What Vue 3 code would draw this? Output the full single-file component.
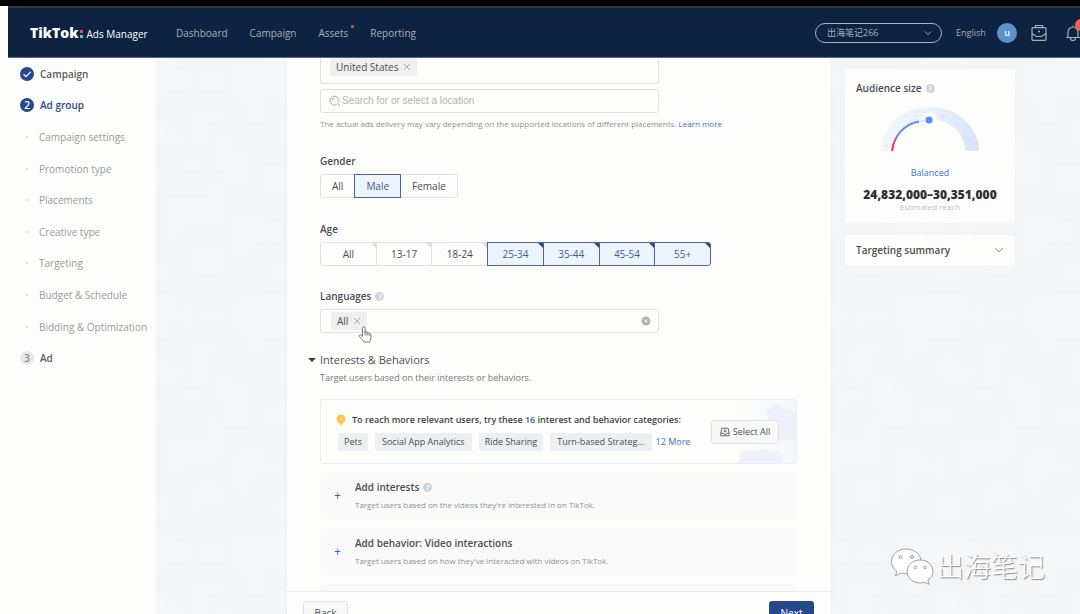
<script setup>
import { ref } from 'vue'

const nav = [
  { label: 'Dashboard' },
  { label: 'Campaign' },
  { label: 'Assets', dot: true },
  { label: 'Reporting' },
]
const steps = ['Campaign settings', 'Promotion type', 'Placements', 'Creative type', 'Targeting', 'Budget & Schedule', 'Bidding & Optimization']
const genders = ['All', 'Male', 'Female']
const gender = ref('Male')
const ages = ['All', '13-17', '18-24', '25-34', '35-44', '45-54', '55+']
const selectedAges = ref(['25-34', '35-44', '45-54', '55+'])
const categories = ['Pets', 'Social App Analytics', 'Ride Sharing', 'Turn-based Strateg...']
const dots = [[6, 40], [10, 32], [17, 21], [25, 15], [35, 10], [62, 10], [75, 18], [83, 27], [88, 35], [44, 6], [70, 14], [92, 41]]

function toggleAge(a) {
  const i = selectedAges.value.indexOf(a)
  if (i >= 0) selectedAges.value.splice(i, 1)
  else selectedAges.value.push(a)
}
</script>

<template>
  <div class="page">
    <header class="topbar">
      <a class="brand" href="#"><b>TikTok</b><i class="colon"></i><span>Ads Manager</span></a>
      <nav>
        <a v-for="n in nav" :key="n.label" href="#">{{ n.label }}<i v-if="n.dot" class="reddot"></i></a>
      </nav>
      <div class="account">
        <select aria-label="Account"><option>出海笔记266</option></select>
        <svg viewBox="0 0 8 8"><path d="M1 2.5 4 5.5 7 2.5" /></svg>
      </div>
      <a class="lang" href="#">English</a>
      <button class="avatar">u</button>
      <button class="icon case" aria-label="Business center">
        <svg viewBox="0 0 18 18"><path d="M5.500 3.700V1.500h7v2.200M3 3.700h12a1 1 0 0 1 1 1v10.600a1 1 0 0 1-1 1H3a1 1 0 0 1-1-1V4.700a1 1 0 0 1 1-1zM2 9.500l4.500 3h5l4.500-3" /><circle cx="9" cy="7.500" r="1" class="fill" /></svg>
      </button>
      <button class="icon bell" aria-label="Notifications">
        <svg viewBox="0 0 18 18"><path d="M2 13.500h14M4 13.500V8a5 5 0 0 1 10 0v5.500M6.500 14a2.500 2.500 0 0 0 5 0M9 3V1.500" /></svg>
        <i class="badge"></i>
      </button>
    </header>

    <div class="workspace">
      <svg class="texture" aria-hidden="true">
        <defs>
          <pattern id="tiles" width="132" height="236" patternUnits="userSpaceOnUse">
            <path d="M0 0h40v12h18v20H36v12H0zM66 18h26v14H66zM104 6h28v58h-18V40h-10zM14 62h20v12h14v12H14zM58 54h30v10h-12v22H58zM0 108h28v22H0zM50 96h18v16H50zM82 82h20v12h16v38H92v-20H82zM34 140h42v-14h14v40H48v12H34zM4 164h14v20H4zM104 158h28v26h-14v14h-14zM62 190h26v26H62zM12 206h26v16H12z" />
          </pattern>
        </defs>
        <rect width="100%" height="100%" fill="url(#tiles)" />
      </svg>

      <aside class="steps">
        <ol>
          <li class="major"><i class="num done"><svg viewBox="0 0 14 14"><path d="M3.500 7.200 6 9.600 10.700 4.800" /></svg></i><a href="#">Campaign</a></li>
          <li class="major current"><i class="num">2</i><a href="#">Ad group</a></li>
          <li v-for="s in steps" :key="s" class="minor"><i class="pip"></i><a href="#">{{ s }}</a></li>
          <li class="major todo"><i class="num">3</i><a href="#">Ad</a></li>
        </ol>
      </aside>

      <main class="panel">
        <div class="content">
          <div class="locations">
            <span class="tag">United States <button aria-label="Remove United States"><svg viewBox="0 0 8 8"><path d="m1 1 6 6M7 1 1 7" /></svg></button></span>
          </div>
          <label class="field search">
            <svg viewBox="0 0 12 12"><path d="M7.600 9.700A4.500 4.500 0 1 1 9.600 7.600M3.300 5.500a2.300 2.300 0 0 1 2-2.200M8.300 8.300l2.700 2.700" /></svg>
            <input type="text" placeholder="Search for or select a location" aria-label="Location" />
          </label>
          <p class="hint">The actual ads delivery may vary depending on the supported locations of different placements. <a href="#">Learn more</a></p>

          <h3>Gender</h3>
          <div class="segments gender">
            <button v-for="g in genders" :key="g" :class="{ on: g === gender }" @click="gender = g">{{ g }}</button>
          </div>

          <h3>Age</h3>
          <div class="segments age">
            <button v-for="a in ages" :key="a" :class="{ on: selectedAges.includes(a) }" @click="toggleAge(a)">{{ a }}</button>
          </div>

          <h3>Languages <i class="help">?</i></h3>
          <div class="field languages">
            <span class="tag">All <button aria-label="Remove All"><svg viewBox="0 0 8 8"><path d="m1 1 6 6M7 1 1 7" /></svg></button></span>
            <svg class="cursor" viewBox="0 0 14 18" aria-hidden="true"><path d="M4.500 10.500V2.200a1.300 1.300 0 0 1 2.600 0V7l.2-1c1-.6 1.900 0 2 .8.900-.5 1.700 0 1.900.8 1-.3 1.700.3 1.700 1.200v3.400c0 1.600-1 2.500-1.300 3.800H5.800C5 14.200 3.300 12.600 1.500 10.300.8 9 2.400 8.300 3.200 9.200z" /><path d="M7.100 7v2.500M9.200 7v2.500M11.200 7.800v2" /></svg>
            <button class="clear" aria-label="Clear languages"><svg viewBox="0 0 10 10"><circle cx="5" cy="5" r="4.500" /><path d="m3.400 3.400 3.200 3.200M6.600 3.400 3.400 6.600" /></svg></button>
          </div>

          <h2><i class="caret"></i>Interests &amp; Behaviors</h2>
          <p class="desc">Target users based on their interests or behaviors.</p>

          <section class="suggest">
            <svg class="gears" viewBox="0 0 58 63" preserveAspectRatio="xMaxYMid slice" aria-hidden="true">
              <path d="M34 4h8l3 5 7-1 3 5h3v29l-5-3-8 3-4-5-8-1 1-8-6-5 3-7-3-6 6-3z" />
              <path d="M0 63l3-10 8-4 8 3 7-4 7 4 6-2 6 6-1 7z" />
            </svg>
            <div class="suggest-text">
              <p class="lead">
                <svg viewBox="0 0 10 12"><path d="M5 .5a4.500 4.500 0 0 1 2.300 8.300L5 11.500 2.700 8.800A4.500 4.500 0 0 1 5 .5z" fill="#fbc646" /><path d="M3.300 4.800q1.700 1.300 3.400 0" fill="none" stroke="#fff4d0" stroke-width=".9" /></svg>
                <span>To reach more relevant users, try these <em>16</em> interest and behavior categories:</span>
              </p>
              <div class="cats">
                <span v-for="c in categories" :key="c">{{ c }}</span>
                <a href="#">12 More</a>
              </div>
            </div>
            <button class="plain select-all">
              <svg viewBox="0 0 12 12"><path d="M2.200 1.500h7.600L11 7v3.500H1V7zM1 7.500h2.800q.5 1.500 2.200 1.500t2.200-1.500H11M6 3v3.500M4.300 4.800h3.400" /></svg>Select All
            </button>
          </section>

          <section class="add">
            <button aria-label="Add interests">+</button>
            <div><h4>Add interests <i class="help">?</i></h4><p>Target users based on the videos they're interested in on TikTok.</p></div>
          </section>
          <section class="add">
            <button aria-label="Add video interactions">+</button>
            <div><h4>Add behavior: Video interactions</h4><p>Target users based on how they've interacted with videos on TikTok.</p></div>
          </section>
          <section class="add"></section>
        </div>
        <footer>
          <button class="plain">Back</button>
          <button class="primary">Next</button>
        </footer>
      </main>

      <aside class="side">
        <section class="card audience">
          <h3>Audience size <i class="help">?</i></h3>
          <svg class="gauge" viewBox="0 0 98 46">
            <defs>
              <linearGradient id="band" x1="0" x2="1"><stop offset="0" stop-color="#f5f7fd" /><stop offset=".5" stop-color="#e9f0fc" /><stop offset="1" stop-color="#d6e4fb" /></linearGradient>
              <linearGradient id="arc" x1="0" y1="1" x2="1" y2="0"><stop offset=".1" stop-color="#ee2e62" /><stop offset=".42" stop-color="#5b8fee" /><stop offset="1" stop-color="#5b96f5" /></linearGradient>
            </defs>
            <path d="M0 45a49 44 0 0 1 98 0H84a35 32 0 0 0-70 0z" fill="url(#band)" />
            <circle v-for="d in dots" :key="d[0]" :cx="d[0]" :cy="d[1]" r=".5" fill="#aabbe0" />
            <circle cx="48" cy="14" r="8" fill="#fdfdfe" />
            <path d="M11 45C13 29 24 18 38 15.500" fill="none" stroke="url(#arc)" stroke-width="2" />
            <path d="M38 15.500 43 14.500" stroke="#cfe0fb" stroke-width="1.500" />
            <circle cx="48" cy="14" r="3.600" fill="#5591f4" />
          </svg>
          <p class="balanced">Balanced</p>
          <p class="reach">24,832,000–30,351,000</p>
          <p class="caption">Estimated reach</p>
        </section>
        <button class="card summary">Targeting summary<svg viewBox="0 0 10 6"><path d="m1 1 4 4 4-4" /></svg></button>
      </aside>

      <div class="watermark">
        <svg viewBox="0 0 44 38">
          <g fill="#fff" stroke="#a0a0a0" stroke-width="1">
            <path d="M16 2C8 2 1.500 7.500 1.500 14.500c0 4 2 7.500 5.500 9.800L5.500 29l5.500-3c1.600.5 3.300.7 5 .7 8 0 15-5 15-12.200S24 2 16 2z" />
            <path d="M30 13c-7 0-13 5-13 11.500S23 36 30 36c1.500 0 3-.3 4.300-.7l4.700 2-1.200-4C41 31.300 43 28.200 43 24.500 43 18 37 13 30 13z" />
          </g>
          <g fill="#fff" stroke="#999"><circle cx="10.500" cy="10" r="1.500" /><circle cx="22" cy="10" r="1.500" /><circle cx="25.500" cy="20.500" r="1.300" /><circle cx="35" cy="20.500" r="1.300" /></g>
        </svg>
        <span>出海笔记</span>
      </div>
    </div>
  </div>
</template>

<style>
body { background: #fdfdfb; }
</style>

<style scoped>
.page {
  height: 100vh;
  overflow: hidden;
  display: flex;
  flex-direction: column;
  border-top: 6px solid #000;
  box-sizing: border-box;
  font: 10px/16px "Open Sans", "Noto Sans", "Noto Sans CJK SC", sans-serif;
  color: #4b4d50;
}
.page * { box-sizing: border-box; }
button, select, input { font: inherit; color: inherit; margin: 0; padding: 0; border: 0; background: none; }
button { cursor: pointer; }
a { color: inherit; text-decoration: none; }
i, em { font-style: normal; }
h2, h3, h4, p, ol { margin: 0; padding: 0; }
svg { display: block; flex: none; fill: none; stroke: currentColor; }

.topbar {
  flex: none;
  height: 52px;
  margin-left: 8px;
  padding-left: 22px;
  background: #0e2341;
  border-top: 2px solid #303845;
  border-bottom: 1px solid #59677c;
  display: flex;
  align-items: center;
  color: #a9afb7;
  overflow: hidden;
  position: relative;
  z-index: 2;
}
.brand { display: flex; align-items: center; color: #fff; width: 146px; }
.brand b { font: 800 14px/20px "Open Sans", sans-serif; }
.brand span { padding-top: 3px; }
.colon { width: 3px; height: 8px; margin: 2px 3px 0 2px; border-top: 3px solid #ef4561; border-bottom: 3px solid #3fd4d4; }
nav { display: flex; gap: 22px; flex: 1; }
nav a { position: relative; }
.reddot { position: absolute; width: 3px; height: 3px; right: -6px; top: 0; background: #f0603f; border-radius: 50%; }
.account { position: relative; width: 127px; height: 20px; margin-right: 14px; }
.account select { appearance: none; width: 100%; height: 20px; border: 1px solid #a9b2bf; border-radius: 10px; padding: 0 24px 0 11px; font-size: 9px; }
.account svg { position: absolute; right: 10px; top: 6px; width: 8px; height: 8px; }
.lang { font-size: 9px; width: 41px; }
.avatar { width: 20px; height: 20px; border-radius: 50%; background: #5c92cb; color: #fff; font-size: 9px; font-weight: 600; margin-right: 13px; }
.icon svg { width: 18px; height: 18px; stroke-width: 1.2; }
.icon .fill { fill: currentColor; stroke: none; }
.case { margin-right: 16px; }
.bell { position: relative; width: 16px; }
.badge { position: absolute; left: 11px; top: -5px; width: 12px; height: 12px; border-radius: 50%; background: #f4604f; }

.workspace { flex: 1; min-height: 0; display: flex; position: relative; background: #f2f5f7; }
.texture { position: absolute; width: 100%; height: 100%; stroke: none; }
.texture path { fill: #f4f7f9; }
.steps { position: relative; width: 157px; flex: none; background: #fdfdfb; border-right: 1px solid #f5f7fa; }
.steps ol { list-style: none; display: grid; grid-auto-rows: 1fr; height: 316px; }
.steps li { display: flex; align-items: center; padding-left: 20px; }
.major { font-weight: 600; color: #5a5c5f; }
.num { width: 14px; height: 14px; line-height: 14px; border-radius: 50%; background: #26498c; color: #fff; text-align: center; margin-right: 6px; }
.num svg { width: 14px; height: 14px; stroke-width: 1.2; }
.current { color: #2c4a80; }
.todo .num { background: #e5e7e9; color: #8a8d90; }
.minor { color: #999b9d; }
.pip { width: 2px; height: 2px; border-radius: 50%; background: #d4d6d8; margin: 0 11px 0 6px; }

.panel { position: relative; flex: 1; min-width: 0; margin-left: 130px; background: #fdfdfb; display: flex; flex-direction: column; box-shadow: 0 0 3px #e4e8ee; }
.content { flex: 1; min-height: 0; overflow: hidden; padding: 0 34px 0 33px; }
.locations { max-width: 339px; height: 26px; border: 1px solid #dfe1e4; border-top: 0; border-radius: 0 0 3px 3px; padding-left: 9px; margin-bottom: 5px; }
.tag { display: inline-flex; align-items: center; height: 18px; padding: 0 6px; gap: 5px; background: #eeefef; border-radius: 2px; }
.tag svg { width: 8px; height: 8px; color: #96989a; stroke-width: .8; }
.field { display: flex; align-items: center; max-width: 339px; height: 24px; border: 1px solid #dfe1e4; border-radius: 3px; }
.search { padding-left: 8px; }
.search svg { width: 12px; height: 12px; color: #aaa; margin-right: 1px; }
.search input { flex: 1; min-width: 0; outline: 0; font-family: "Liberation Sans", Arial, sans-serif; }
.search input::placeholder { color: #b2b3b5; opacity: 1; }
.hint { font-size: 8px; line-height: 14px; color: #8f9194; margin: 4px 0 22px; white-space: nowrap; }
.hint a { color: #3f70c4; }
h3, h4 { font-size: 10px; line-height: 16px; font-weight: 600; color: #4b4d50; display: flex; align-items: center; gap: 4px; }
.content h3 { margin-bottom: 5px; }
.help { width: 9px; height: 9px; border-radius: 50%; background: #d2d3d4; color: #fff; font-size: 8px; line-height: 9px; text-align: center; }
.segments { display: flex; height: 24px; margin-bottom: 23px; }
.segments button { position: relative; border: 1px solid #dfe1e4; margin-left: -1px; }
.segments button:first-child { margin-left: 0; border-radius: 3px 0 0 3px; }
.segments button:last-child { border-radius: 0 3px 3px 0; }
.segments .on { z-index: 1; background: #eef4fe; border-color: #4b6796; color: #3c5c96; }
.gender button { padding: 0 11px; }
.age { max-width: 391px; margin-bottom: 22px; }
.age button { flex: 1; }
.age button::after { content: ""; position: absolute; top: 0; right: 0; border: solid transparent; border-width: 0 0 5px 5px; border-right: 0; border-top: 5px solid #dcdddf; border-bottom: 0; }
.age .on::after { border-top-color: #26498c; }
.languages { position: relative; padding: 0 7px 0 10px; justify-content: space-between; }
.cursor { position: absolute; left: 37px; top: 16px; width: 14px; height: 18px; color: #66686a; fill: #fff; stroke-width: .9; z-index: 3; }
.clear svg { width: 10px; height: 10px; fill: #b2b3b5; stroke: none; }
.clear path { stroke: #fff; stroke-width: .8; }
h2 { position: relative; font-size: 11px; line-height: 16px; font-weight: 400; color: #4b4d50; margin: 19px 0 2px; }
.caret { position: absolute; left: -12px; top: 6px; border: solid transparent; border-width: 4px 4px 0; border-top-color: #3c3e40; }
.desc { font-size: 9px; color: #77797c; }

.suggest { position: relative; display: flex; align-items: center; justify-content: space-between; height: 65px; margin: 13px 0 8px; padding: 0 17px 0 15px; border: 1px solid #eaedf2; border-radius: 3px; }
.gears { position: absolute; right: 0; top: 0; width: 58px; height: 63px; fill: #ecf1fb; stroke: none; background: linear-gradient(90deg, #fdfdfb, #f3f6fc); }
.suggest-text { position: relative; padding-bottom: 1px; }
.lead { display: flex; align-items: center; gap: 6px; margin-bottom: 5px; font-size: 9px; font-weight: 600; color: #3f4144; white-space: nowrap; }
.lead svg { width: 10px; height: 12px; stroke: none; }
.lead em { color: #3c5c96; }
.cats { display: flex; gap: 7px; padding-left: 2px; font-size: 9px; line-height: 18px; white-space: nowrap; }
.cats span { padding: 0 6px; background: #ecf0f3; border-radius: 2px; }
.cats span:nth-child(2), .cats span:nth-child(4) { padding: 0 7px; }
.cats a { color: #3f70c4; margin-left: -3px; }
.plain { background: #f8f8f8; border: 1px solid #e0e2e5; border-radius: 3px; }
.select-all { position: relative; flex: none; display: flex; align-items: center; justify-content: center; gap: 3px; width: 68px; height: 24px; font-size: 9px; white-space: nowrap; }
.select-all svg { width: 10px; height: 10px; }

.add { display: flex; align-items: center; height: 48px; margin-bottom: 8px; background: #fafafa; border-radius: 3px; }
.add button { width: 35px; color: #3f68b4; font-size: 12px; }
.add p { font-size: 8px; line-height: 16px; color: #8f9194; margin-top: 2px; white-space: nowrap; }
footer { flex: none; height: 23px; overflow: hidden; display: flex; justify-content: space-between; align-items: flex-start; padding: 9px 17px 0 16px; border-top: 1px solid #eceef1; }
footer button { width: 45px; height: 24px; flex: none; }
.primary { background: #26498c; color: #fff; border-radius: 3px; }

.side { position: relative; flex: none; width: 170px; margin: 11px 65px 0 14px; }
.card { display: block; width: 100%; background: #fdfdfb; border-radius: 3px; padding: 0 11px; }
.audience { height: 154px; padding-top: 11px; margin-bottom: 12px; text-align: center; }
.gauge { width: 98px; height: 46px; margin: 10px auto 14px; stroke: none; }
.balanced { font-size: 9px; font-weight: 500; color: #3f74cb; line-height: 14px; margin-bottom: 7px; }
.reach { font-size: 12px; font-weight: 800; color: #2e3033; line-height: 16px; white-space: nowrap; }
.caption { font-size: 8px; line-height: 8px; color: #bcbec0; }
.summary { display: flex; align-items: center; justify-content: space-between; height: 30px; font-weight: 600; color: #4b4d50; }
.summary svg { width: 10px; height: 6px; color: #96989a; }
.watermark { position: absolute; right: 35px; bottom: 29px; display: flex; align-items: center; gap: 3px; }
.watermark svg { width: 44px; height: 38px; }
.watermark span { font: 300 27px/38px "Noto Sans CJK SC", sans-serif; color: #fff; text-shadow: 1px 1px 1px #858585; }
</style>
